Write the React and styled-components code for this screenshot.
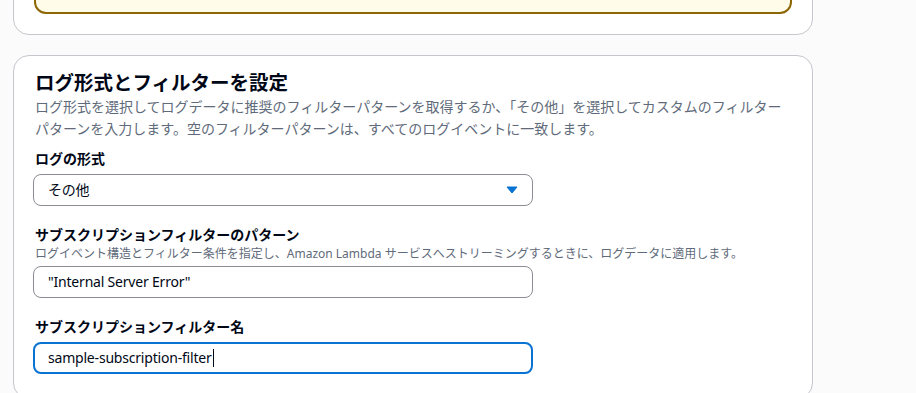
import styled, { createGlobalStyle } from "styled-components";

const GlobalStyle = createGlobalStyle`
  html, body {
    margin: 0;
    padding: 0;
    background: #fbfbfb;
    overflow: hidden;
  }
  body {
    font-family: "Noto Sans", "Noto Sans CJK JP", sans-serif;
    color: #000716;
  }
`;

const Page = styled.div`
  width: 800px;
  margin: -47px 0 0 13px;
  display: flex;
  flex-direction: column;
  gap: 20px;
`;

const Card = styled.section`
  background: #ffffff;
  border: 1px solid #c6c6cd;
  border-radius: 16px;
  padding: ${(p) => p.$pad || "20px"};
`;

const Alert = styled.div`
  height: 36px;
  background: #fffce9;
  border: 2px solid #8d6605;
  border-radius: 12px;
`;

const Heading = styled.h2`
  margin: 0;
  font-size: 19.5px;
  line-height: 26px;
  font-weight: 700;
`;

const Description = styled.p`
  margin: 0;
  font-size: 14px;
  line-height: 22px;
  color: #5f6b7a;
`;

const Field = styled.div`
  display: flex;
  flex-direction: column;
  margin-top: ${(p) => p.$top || "18px"};
`;

const Label = styled.label`
  font-size: 14px;
  line-height: 22px;
  font-weight: 700;
`;

const Hint = styled.span`
  font-size: 12px;
  line-height: 16px;
  color: #5f6b7a;
`;

const Box = styled.div`
  box-sizing: border-box;
  width: 500px;
  height: 32px;
  margin: 4px 0 0 -2px;
  display: flex;
  align-items: center;
  justify-content: space-between;
  padding: 0 ${(p) => (p.$focused ? "13px" : "14px")};
  border: ${(p) => (p.$focused ? "2px solid #0972d3" : "1px solid #8c8c94")};
  border-radius: 8px;
  background: #ffffff;
  font-size: 14px;
  line-height: 22px;
  letter-spacing: -0.2px;
  color: #000716;
`;

const Value = styled.span`
  display: inline-flex;
  align-items: center;
`;

const Caret = styled.span`
  display: inline-block;
  width: 1px;
  height: 18px;
  background: #000716;
  margin-left: 1px;
`;

const Arrow = () => (
  <svg width="12" height="8" viewBox="0 0 12 8">
    <path d="M1 1 L11 1 L6 7 Z" fill="#0972d3" stroke="#0972d3" strokeWidth="1" strokeLinejoin="round" />
  </svg>
);

export default function App() {
  return (
    <>
      <GlobalStyle />
      <Page>
        <Card>
          <Alert />
        </Card>
        <Card $pad="14px 20px 24px 21px">
          <Heading>ログ形式とフィルターを設定</Heading>
          <Description>
            ログ形式を選択してログデータに推奨のフィルターパターンを取得するか、「その他」を選択してカスタムのフィルターパターンを入力します。空のフィルターパターンは、すべてのログイベントに一致します。
          </Description>
          <Field $top="8px">
            <Label>ログの形式</Label>
            <Box>
              <Value>その他</Value>
              <Arrow />
            </Box>
          </Field>
          <Field>
            <Label>サブスクリプションフィルターのパターン</Label>
            <Hint>
              ログイベント構造とフィルター条件を指定し、Amazon Lambda サービスへストリーミングするときに、ログデータに適用します。
            </Hint>
            <Box>
              <Value>"Internal Server Error"</Value>
            </Box>
          </Field>
          <Field>
            <Label>サブスクリプションフィルター名</Label>
            <Box $focused>
              <Value>
                sample-subscription-filter
                <Caret />
              </Value>
            </Box>
          </Field>
        </Card>
      </Page>
    </>
  );
}
